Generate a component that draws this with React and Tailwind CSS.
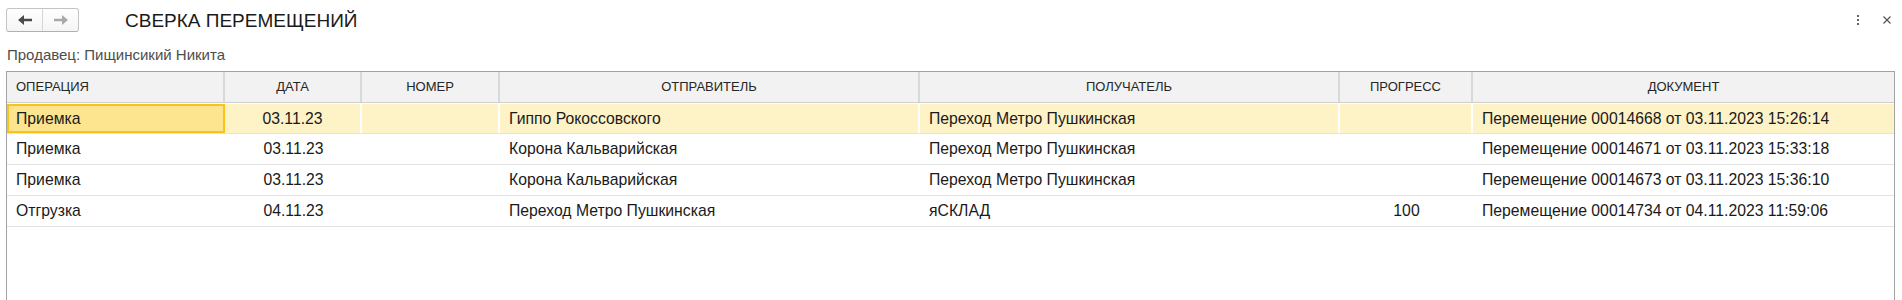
import React from 'react';

const columns = [
  { key: 'op', title: 'ОПЕРАЦИЯ', w: 'w-[218px]', head: 'text-left pl-[9px]', cell: 'text-left pl-[9px]' },
  { key: 'date', title: 'ДАТА', w: 'w-[137px]', head: 'text-center', cell: 'text-center' },
  { key: 'num', title: 'НОМЕР', w: 'w-[138px]', head: 'text-center', cell: 'text-center' },
  { key: 'from', title: 'ОТПРАВИТЕЛЬ', w: 'w-[420px]', head: 'text-center', cell: 'text-left pl-[9px]' },
  { key: 'to', title: 'ПОЛУЧАТЕЛЬ', w: 'w-[420px]', head: 'text-center', cell: 'text-left pl-[9px]' },
  { key: 'progress', title: 'ПРОГРЕСС', w: 'w-[133px]', head: 'text-center', cell: 'text-center' },
  { key: 'doc', title: 'ДОКУМЕНТ', w: 'flex-1', head: 'text-center', cell: 'text-left pl-[9px]' },
];

const rows = [
  { op: 'Приемка', date: '03.11.23', num: '', from: 'Гиппо Рокоссовского', to: 'Переход Метро Пушкинская', progress: '', doc: 'Перемещение 00014668 от 03.11.2023 15:26:14' },
  { op: 'Приемка', date: '03.11.23', num: '', from: 'Корона Кальварийская', to: 'Переход Метро Пушкинская', progress: '', doc: 'Перемещение 00014671 от 03.11.2023 15:33:18' },
  { op: 'Приемка', date: '03.11.23', num: '', from: 'Корона Кальварийская', to: 'Переход Метро Пушкинская', progress: '', doc: 'Перемещение 00014673 от 03.11.2023 15:36:10' },
  { op: 'Отгрузка', date: '04.11.23', num: '', from: 'Переход Метро Пушкинская', to: 'яСКЛАД', progress: '100', doc: 'Перемещение 00014734 от 04.11.2023 11:59:06' },
];

function Arrow({ dir, color }) {
  // filled head + thick stem, like the 1C navigation arrows
  const d = dir === 'left'
    ? 'M0 5 L6 0 L6 3.8 L14 3.8 L14 6.2 L6 6.2 L6 10 Z'
    : 'M14 5 L8 0 L8 3.8 L0 3.8 L0 6.2 L8 6.2 L8 10 Z';
  return (
    <svg width="14" height="10" viewBox="0 0 14 10">
      <path d={d} fill={color} />
    </svg>
  );
}

export default function App() {
  return (
    <div className="h-[300px] w-[1902px] overflow-hidden bg-white flex flex-col" style={{ fontFamily: '"Liberation Sans", Arial, sans-serif' }}>
      {/* Top bar */}
      <div className="h-[40px] flex items-center relative">
        <div className="ml-[6px] h-[24px] w-[73px] flex rounded-[3px] border border-[#c4c4c4] border-b-[#b0b0b0] bg-gradient-to-b from-white to-[#f4f4f4]">
          <div className="w-[36px] flex items-center justify-center border-r border-[#d6d6d6]">
            <Arrow dir="left" color="#4a4a4a" />
          </div>
          <div className="flex-1 flex items-center justify-center">
            <Arrow dir="right" color="#a9a9a9" />
          </div>
        </div>
        <div className="ml-[46px] text-[19px] text-[#1a1a1a] leading-none">СВЕРКА ПЕРЕМЕЩЕНИЙ</div>
        <div className="ml-auto mr-[11px] flex items-center gap-[24px]">
          <div className="flex flex-col gap-[2px] items-center">
            <span className="w-[2px] h-[2px] bg-[#666]" />
            <span className="w-[2px] h-[2px] bg-[#666]" />
            <span className="w-[2px] h-[2px] bg-[#666]" />
          </div>
          <svg width="8" height="8" viewBox="0 0 8 8">
            <path d="M0.5 0.5 L7.5 7.5 M7.5 0.5 L0.5 7.5" stroke="#555" strokeWidth="1.2" />
          </svg>
        </div>
      </div>

      {/* Seller line */}
      <div className="h-[31px] pl-[7px] flex items-center text-[15px] text-[#4d4d4d]">
        Продавец: Пищинсикий Никита
      </div>

      {/* Table */}
      <div className="ml-[6px] mr-[7px] flex-1 border border-b-0 border-[#a3a3a3] flex flex-col">
        <div className="h-[31px] flex bg-[#f2f2f2] border-b border-[#cfcfcf] text-[13px] text-[#262626]">
          {columns.map((c, i) => (
            <div
              key={c.key}
              className={`${c.w} ${c.head} flex items-center ${c.head.includes('center') ? 'justify-center' : ''} ${i < columns.length - 1 ? 'border-r-2 border-[#d9d9d9]' : ''}`}
            >
              {c.title}
            </div>
          ))}
        </div>
        {rows.map((r, ri) => {
          const selected = ri === 0;
          return (
            <div key={ri} className={`h-[31px] flex border-b border-[#e3e3e3] text-[15.75px] text-[#1a1a1a] ${selected ? 'pt-px' : ''}`}>
              {columns.map((c, ci) => {
                let cls = '';
                if (selected && ci === 0) cls = 'bg-[#fde48f] border-2 border-[#f7c41a] pl-[7px]';
                else if (selected) cls = `bg-[#fef2c7] ${ci < columns.length - 1 ? 'border-r-2 border-white' : ''}`;
                return (
                  <div
                    key={c.key}
                    className={`${c.w} ${selected && ci === 0 ? 'text-left' : c.cell} ${cls} flex items-center ${c.cell.includes('center') ? 'justify-center' : ''} whitespace-nowrap overflow-hidden`}
                  >
                    {r[c.key]}
                  </div>
                );
              })}
            </div>
          );
        })}
      </div>
    </div>
  );
}
